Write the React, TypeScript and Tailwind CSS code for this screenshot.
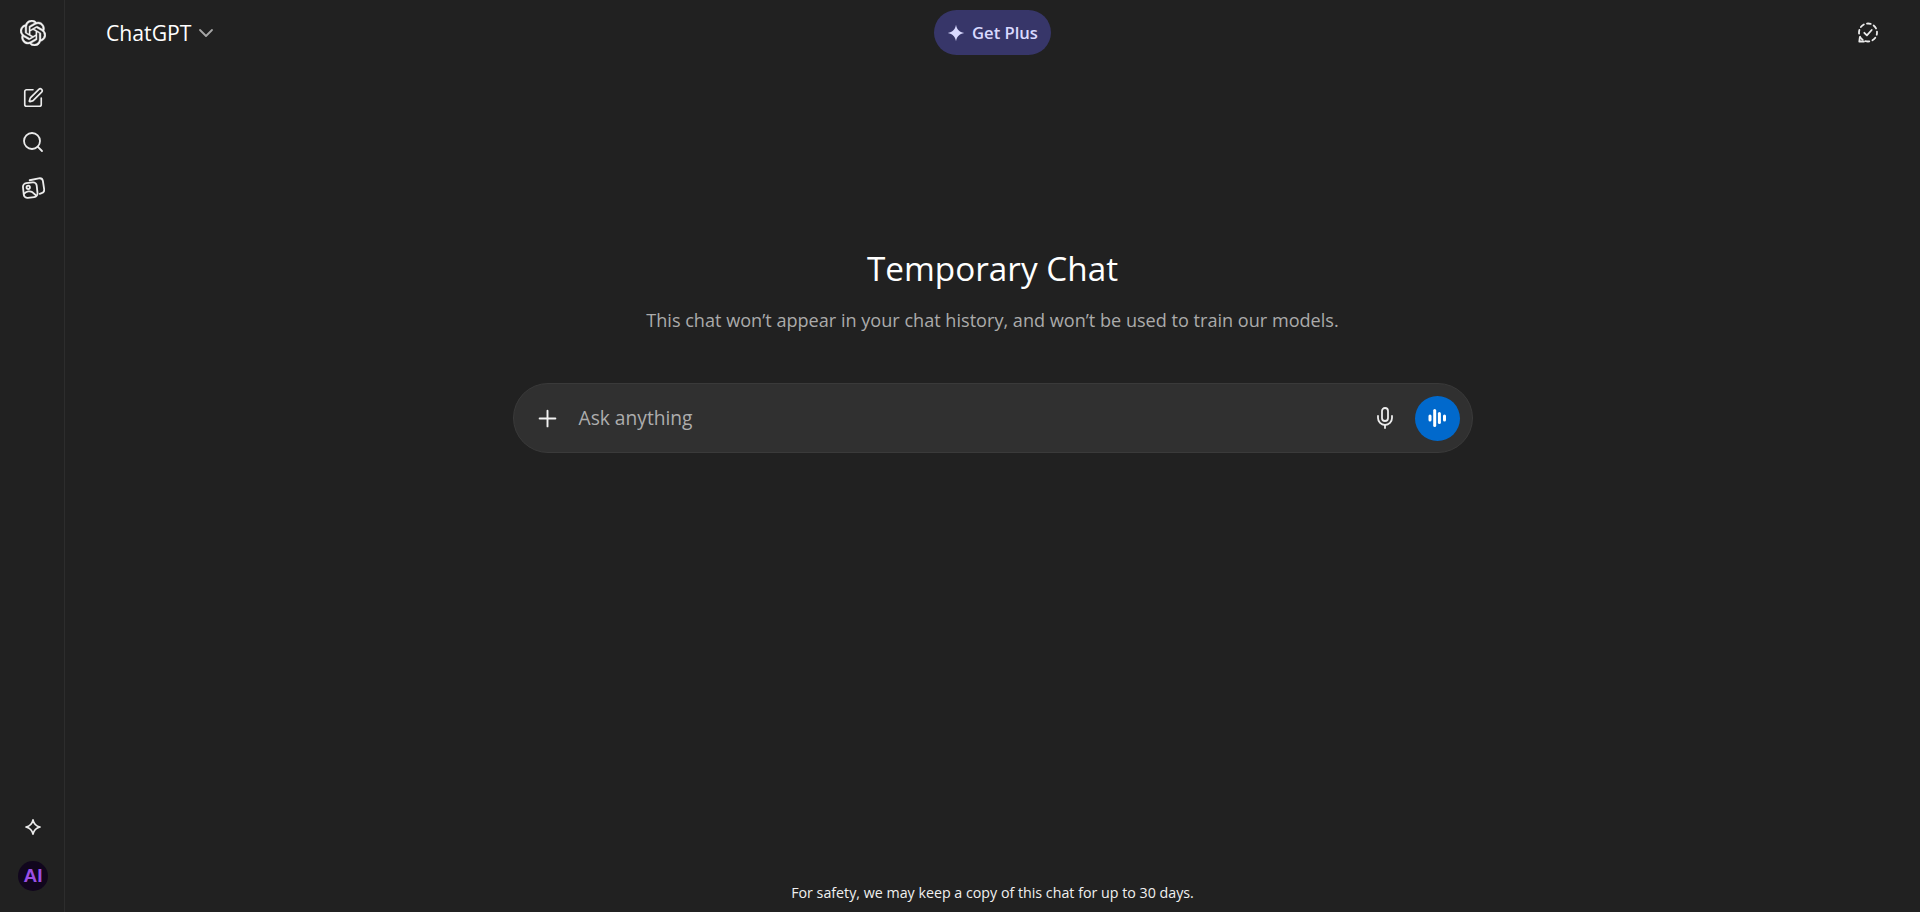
import { ChevronDown, Mic, Plus, Search, SquarePen } from "lucide-react";
import { SiOpenai } from "react-icons/si";

function ImagesIcon() {
  return (
    <svg className="mt-[2px]" width="23" height="23" viewBox="0 0 24 24" fill="none" stroke="currentColor" strokeWidth="1.9" strokeLinecap="round" strokeLinejoin="round">
      <path d="M8 3.400 17.500 1.400c2.200-.4 3.900.7 4.300 2.700l1.300 8.600c.3 2-.6 3.600-2.600 4.200l-2 .6" />
      <rect x="1.400" y="6" width="14.400" height="15.400" rx="3.800" transform="rotate(-6 8.600 13.700)" />
      <circle cx="6.500" cy="10.800" r="1.800" />
      <path d="M2 17.500c2.500-2.700 6.500-3.300 9-1.500l3.800 3.300" />
    </svg>
  );
}

function SparkleOutline() {
  return (
    <svg width="18" height="18" viewBox="0 0 18 18" fill="none" stroke="currentColor" strokeWidth="1.7" strokeLinejoin="round">
      <path d="M9 1.800c.8 4 2.800 6.200 7 7.200-4.200 1-6.200 3.200-7 7.200-.8-4-2.800-6.200-7-7.200 4.200-1 6.200-3.200 7-7.200Z" />
    </svg>
  );
}

function TempChatIcon() {
  return (
    <svg width="22" height="22" viewBox="0 0 22 22" fill="none" stroke="currentColor" strokeWidth="1.8" strokeLinecap="round" strokeLinejoin="round">
      <circle cx="11" cy="10.500" r="9" strokeDasharray="3.800 3.300" strokeDashoffset="1.500" />
      <path d="M2.800 15.500 2.300 19.500H7" />
      <path d="m7.300 10.800 2.600 2.600 4.800-5.400" />
    </svg>
  );
}

function VoiceBars() {
  return (
    <svg width="20" height="20" viewBox="0 0 20 20" fill="white">
      <rect x="1.500" y="6.500" width="3" height="7" rx="1.500" />
      <rect x="6.200" y="1" width="3" height="18" rx="1.500" />
      <rect x="10.900" y="4" width="3" height="12" rx="1.500" />
      <rect x="16" y="6.500" width="3" height="7" rx="1.500" />
    </svg>
  );
}

export default function App() {
  return (
    <div className="flex h-screen overflow-hidden bg-[#212121] text-white font-['Open_Sans','Noto_Sans',sans-serif]">
      {/* Sidebar rail */}
      <aside className="flex w-[65px] shrink-0 flex-col items-center border-r border-[#2d2d2d] pt-[20px] pb-[21px] pl-[2px]">
        <SiOpenai className="h-[26px] w-[26px] stroke-[0.4px] text-[#f2f2f2]" />
        <div className="mt-[41px] flex flex-col items-center gap-[21px] text-[#ececec]">
          <SquarePen className="h-[22px] w-[22px]" strokeWidth={1.8} />
          <Search className="-ml-[1px] h-[24px] w-[24px]" strokeWidth={1.8} />
          <ImagesIcon />
        </div>
        <div className="mt-auto flex flex-col items-center gap-[25px] text-[#ececec]">
          <SparkleOutline />
          <div className="flex h-[30px] w-[30px] items-center justify-center rounded-full bg-[#11061d] font-['Liberation_Sans',sans-serif] text-[19px] font-bold text-[#9b4fe3]">
            AI
          </div>
        </div>
      </aside>

      <main className="flex min-w-0 flex-1 flex-col">
        {/* Top bar */}
        <header className="grid grid-cols-[1fr_auto_1fr] items-center pt-[10px] pl-[41px] pr-[41px]">
          <div className="flex items-center gap-[2px]">
            <span className="text-[21.2px] leading-[28px]">ChatGPT</span>
            <ChevronDown className="h-[24px] w-[24px] text-[#a6a6a6]" strokeWidth={1.8} />
          </div>
          <button className="flex h-[45px] w-[117px] items-center justify-center gap-[7px] rounded-full bg-[#373669] text-[16.6px] font-semibold text-[#d9d9ff]">
            <svg width="18" height="18" viewBox="0 0 18 18" fill="currentColor">
              <path d="M9 .8c.9 4.700 3.300 7.200 8.200 8.200-4.900 1-7.300 3.500-8.200 8.200C8.100 12.500 5.700 10 .8 9 5.700 8 8.100 5.500 9 .8Z" />
            </svg>
            <span className="pt-[1px]">Get Plus</span>
          </button>
          <div className="flex justify-end text-[#ececec]">
            <TempChatIcon />
          </div>
        </header>

        {/* Center content */}
        <section className="mt-[191px] flex flex-col items-center">
          <h1 className="text-[33.3px] leading-[44px]">Temporary Chat</h1>
          <p className="mt-[16px] text-[18.1px] leading-[28px] text-[#ababab]">
            This chat won’t appear in your chat history, and won’t be used to train our models.
          </p>
          <div className="mt-[49px] flex h-[70px] w-[960px] items-center rounded-[35px] border border-[#3a3a3a] bg-[#303030] pl-[20px] pr-[12px]">
            <Plus className="h-[27px] w-[27px] text-[#f2f2f2]" strokeWidth={1.7} />
            <span className="ml-[18px] flex-1 text-[19.2px] text-[#adadad]">Ask anything</span>
            <Mic className="h-[24px] w-[24px] text-[#ececec]" strokeWidth={1.8} />
            <div className="ml-[18px] flex h-[45px] w-[45px] items-center justify-center rounded-full bg-[#0169cc]">
              <VoiceBars />
            </div>
          </div>
        </section>

        <footer className="mt-auto pb-[9px] text-center text-[14.25px] leading-[20px] text-[#f0f0f0]">
          For safety, we may keep a copy of this chat for up to 30 days.
        </footer>
      </main>
    </div>
  );
}
